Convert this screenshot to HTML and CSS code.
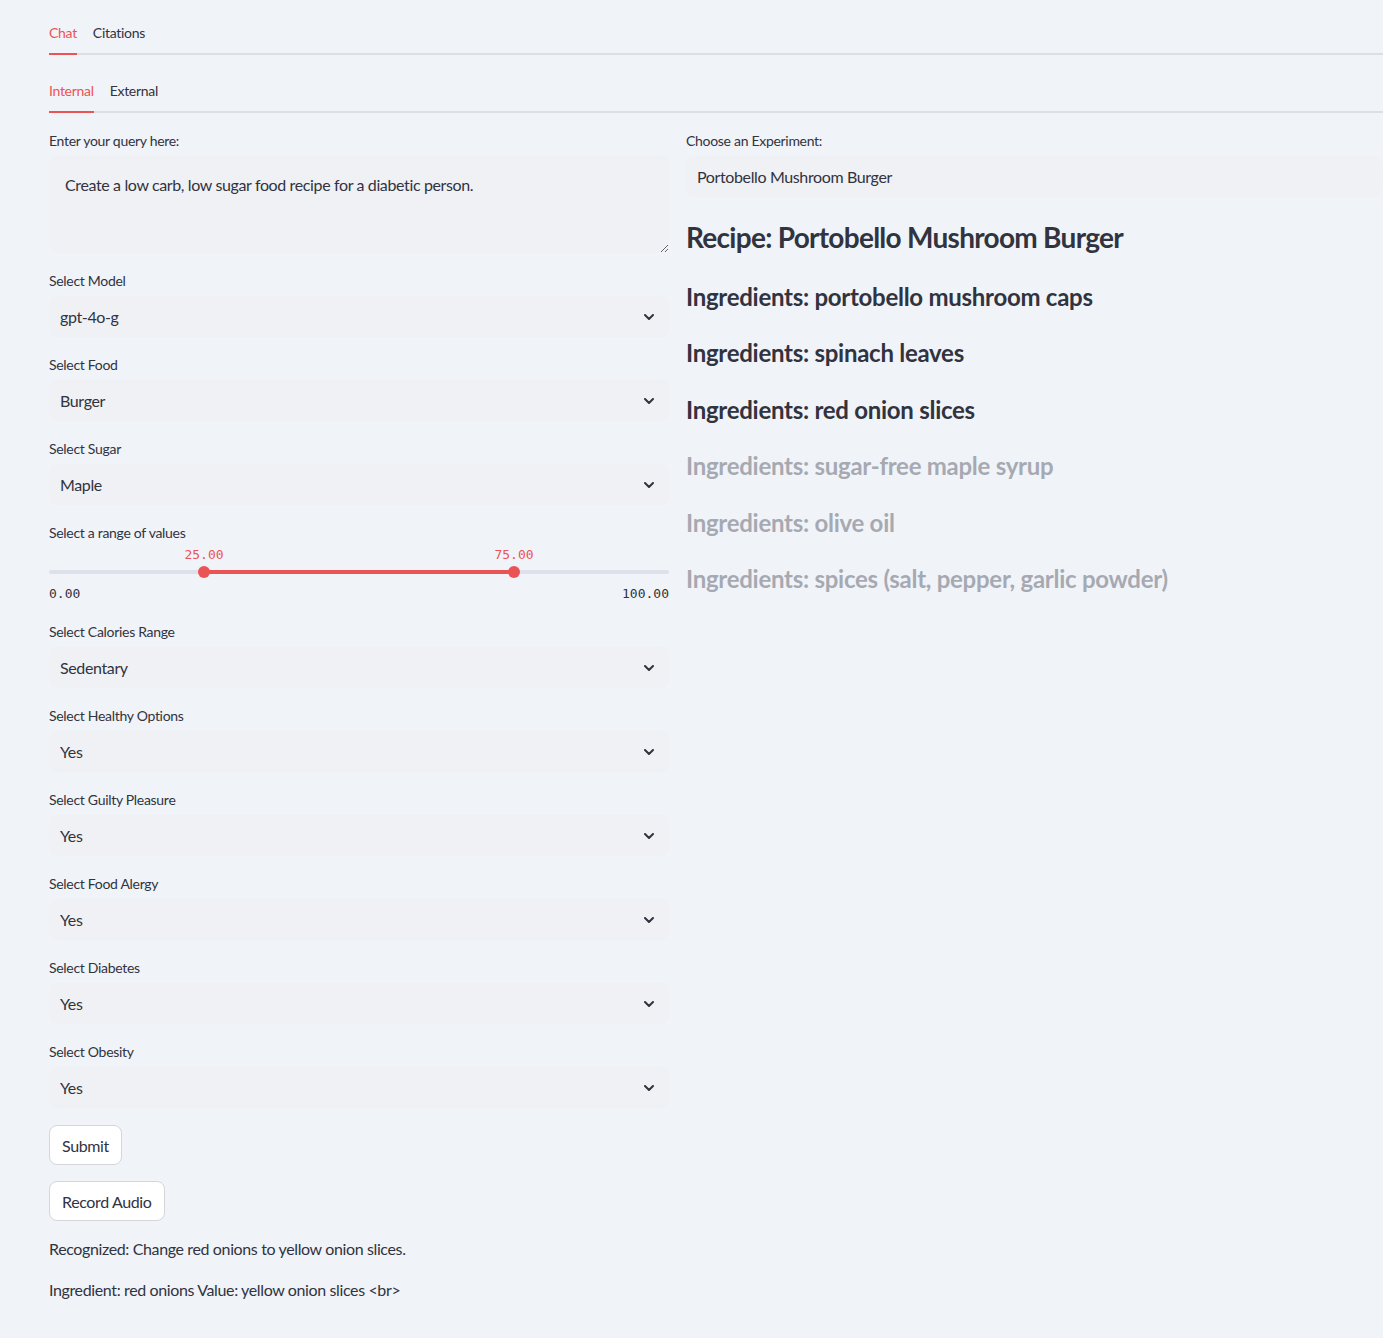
FILE: index.html
```html
<!DOCTYPE html>
<html lang="en">
<head>
<meta charset="utf-8">
<title>Recipe Chat</title>
<link rel="stylesheet" href="styles.css">
</head>
<body>
<main class="app">
  <nav class="tabs tabs-top">
    <span class="tab active">Chat</span>
    <span class="tab">Citations</span>
  </nav>
  <nav class="tabs tabs-sub">
    <span class="tab active">Internal</span>
    <span class="tab">External</span>
  </nav>

  <div class="columns">
    <section class="col col-left">
      <div class="field">
        <label class="label">Enter your query here:</label>
        <textarea class="textarea" readonly>Create a low carb, low sugar food recipe for a diabetic person.</textarea>
      </div>

      <div class="field">
        <label class="label">Select Model</label>
        <div class="select"><span>gpt-4o-g</span><svg class="chev" viewBox="0 0 10 6" width="10" height="6"><path d="M1 1l4 4 4-4" /></svg></div>
      </div>
      <div class="field">
        <label class="label">Select Food</label>
        <div class="select"><span>Burger</span><svg class="chev" viewBox="0 0 10 6" width="10" height="6"><path d="M1 1l4 4 4-4" /></svg></div>
      </div>
      <div class="field">
        <label class="label">Select Sugar</label>
        <div class="select"><span>Maple</span><svg class="chev" viewBox="0 0 10 6" width="10" height="6"><path d="M1 1l4 4 4-4" /></svg></div>
      </div>

      <div class="field slider-field">
        <label class="label">Select a range of values</label>
        <div class="slider">
          <div class="slider-values">
            <span class="thumb-value" style="left:25%">25.00</span>
            <span class="thumb-value" style="left:75%">75.00</span>
          </div>
          <div class="track">
            <div class="track-fill" style="left:25%;width:50%"></div>
            <span class="thumb" style="left:25%"></span>
            <span class="thumb" style="left:75%"></span>
          </div>
          <div class="slider-ticks"><span>0.00</span><span>100.00</span></div>
        </div>
      </div>

      <div class="field">
        <label class="label">Select Calories Range</label>
        <div class="select"><span>Sedentary</span><svg class="chev" viewBox="0 0 10 6" width="10" height="6"><path d="M1 1l4 4 4-4" /></svg></div>
      </div>
      <div class="field">
        <label class="label">Select Healthy Options</label>
        <div class="select"><span>Yes</span><svg class="chev" viewBox="0 0 10 6" width="10" height="6"><path d="M1 1l4 4 4-4" /></svg></div>
      </div>
      <div class="field">
        <label class="label">Select Guilty Pleasure</label>
        <div class="select"><span>Yes</span><svg class="chev" viewBox="0 0 10 6" width="10" height="6"><path d="M1 1l4 4 4-4" /></svg></div>
      </div>
      <div class="field">
        <label class="label">Select Food Alergy</label>
        <div class="select"><span>Yes</span><svg class="chev" viewBox="0 0 10 6" width="10" height="6"><path d="M1 1l4 4 4-4" /></svg></div>
      </div>
      <div class="field">
        <label class="label">Select Diabetes</label>
        <div class="select"><span>Yes</span><svg class="chev" viewBox="0 0 10 6" width="10" height="6"><path d="M1 1l4 4 4-4" /></svg></div>
      </div>
      <div class="field field-last">
        <label class="label">Select Obesity</label>
        <div class="select"><span>Yes</span><svg class="chev" viewBox="0 0 10 6" width="10" height="6"><path d="M1 1l4 4 4-4" /></svg></div>
      </div>

      <div class="buttons">
        <button class="btn" type="button">Submit</button>
        <button class="btn" type="button">Record Audio</button>
      </div>

      <p class="text">Recognized: Change red onions to yellow onion slices.</p>
      <p class="text">Ingredient: red onions Value: yellow onion slices &lt;br&gt;</p>
    </section>

    <section class="col col-right">
      <div class="field">
        <label class="label">Choose an Experiment:</label>
        <div class="select"><span>Portobello Mushroom Burger</span></div>
      </div>
      <div class="recipe">
        <h3 class="recipe-title">Recipe: Portobello Mushroom Burger</h3>
        <h4 class="ingredient">Ingredients: portobello mushroom caps</h4>
        <h4 class="ingredient">Ingredients: spinach leaves</h4>
        <h4 class="ingredient">Ingredients: red onion slices</h4>
        <h4 class="ingredient stale">Ingredients: sugar-free maple syrup</h4>
        <h4 class="ingredient stale">Ingredients: olive oil</h4>
        <h4 class="ingredient stale">Ingredients: spices (salt, pepper, garlic powder)</h4>
      </div>
    </section>
  </div>
</main>
</body>
</html>
```
FILE: styles.css
```css
html, body {
  margin: 0;
  padding: 0;
  background: #f0f3f8;
  overflow-x: hidden;
}

body {
  font-family: "Lato", "Noto Sans", sans-serif;
  color: #31333f;
  letter-spacing: -0.3px;
}

.app {
  padding: 14px 0 40px 49px;
}

/* Tabs */
.tabs {
  display: flex;
  gap: 16px;
  border-bottom: 2px solid #dcdee4;
}
.tabs-sub {
  margin-top: 17px;
}
.tab {
  position: relative;
  font-size: 14px;
  line-height: 20px;
  padding: 9px 0 10px;
  color: #31333f;
}
.tab.active {
  color: #eb5454;
}
.tab.active::after {
  content: "";
  position: absolute;
  left: 0;
  right: 0;
  bottom: -2px;
  height: 2px;
  background: #eb5454;
}

/* Columns */
.columns {
  display: grid;
  grid-template-columns: 620px 1fr;
  column-gap: 17px;
  margin-top: 18px;
}

.field {
  display: flex;
  flex-direction: column;
  margin-bottom: 18px;
}
.field-last {
  margin-bottom: 17px;
}

.label {
  font-size: 14px;
  line-height: 20px;
  margin-bottom: 5px;
  color: #31333f;
}

.textarea {
  box-sizing: border-box;
  height: 97px;
  border: none;
  border-radius: 8px;
  background: #eff1f5;
  padding: 17px 16px 12px;
  font-family: inherit;
  font-size: 16px;
  line-height: 24px;
  color: #31333f;
  letter-spacing: -0.37px;
  resize: vertical;
  outline: none;
}

.select {
  box-sizing: border-box;
  height: 41px;
  border-radius: 8px;
  background: #eff1f5;
  display: flex;
  align-items: center;
  justify-content: space-between;
  padding: 0 15px 0 11px;
  font-size: 16px;
  letter-spacing: -0.37px;
}
.chev {
  fill: none;
  stroke: #31333f;
  stroke-width: 2;
  stroke-linecap: round;
  stroke-linejoin: round;
}

/* Slider */
.slider-field {
  margin-bottom: 18px;
}
.slider {
  margin-top: -3px;
}
.slider-values {
  position: relative;
  height: 20px;
  font-family: "DejaVu Sans Mono", "Liberation Mono", monospace;
  font-size: 13px;
  line-height: 20px;
  color: #eb5454;
  letter-spacing: 0;
}
.thumb-value {
  position: absolute;
  top: 0;
  transform: translateX(-50%);
}
.track {
  position: relative;
  height: 4px;
  margin: 5px 0;
  border-radius: 2px;
  background: #dee1e9;
}
.track-fill {
  position: absolute;
  top: 0;
  bottom: 0;
  background: #eb5454;
}
.thumb {
  position: absolute;
  top: 50%;
  width: 12px;
  height: 12px;
  border-radius: 50%;
  background: #eb5454;
  transform: translate(-50%, -50%);
}
.slider-ticks {
  display: flex;
  justify-content: space-between;
  margin-top: 10px;
  font-family: "DejaVu Sans Mono", "Liberation Mono", monospace;
  font-size: 13px;
  line-height: 20px;
  color: #31333f;
  letter-spacing: 0;
}

/* Buttons */
.buttons {
  display: flex;
  flex-direction: column;
  align-items: flex-start;
  gap: 16px;
}
.btn {
  box-sizing: border-box;
  height: 40px;
  padding: 0 12px;
  border: 1px solid #d5d6da;
  border-radius: 8px;
  background: #ffffff;
  font-family: inherit;
  font-size: 16px;
  color: #31333f;
  letter-spacing: -0.37px;
}

.text {
  margin: 16px 0 0;
  font-size: 16px;
  line-height: 24px;
  letter-spacing: -0.37px;
}
.text + .text {
  margin-top: 17px;
}

/* Right column */
.recipe {
  padding-top: 5px;
}
.recipe-title {
  margin: 0;
  font-size: 28px;
  line-height: 34px;
  font-weight: 700;
  letter-spacing: -0.72px;
}
.ingredient {
  margin: 27.5px 0 0;
  font-size: 24px;
  line-height: 29px;
  font-weight: 700;
  letter-spacing: -0.27px;
}
.ingredient.stale {
  opacity: 0.38;
}
```
